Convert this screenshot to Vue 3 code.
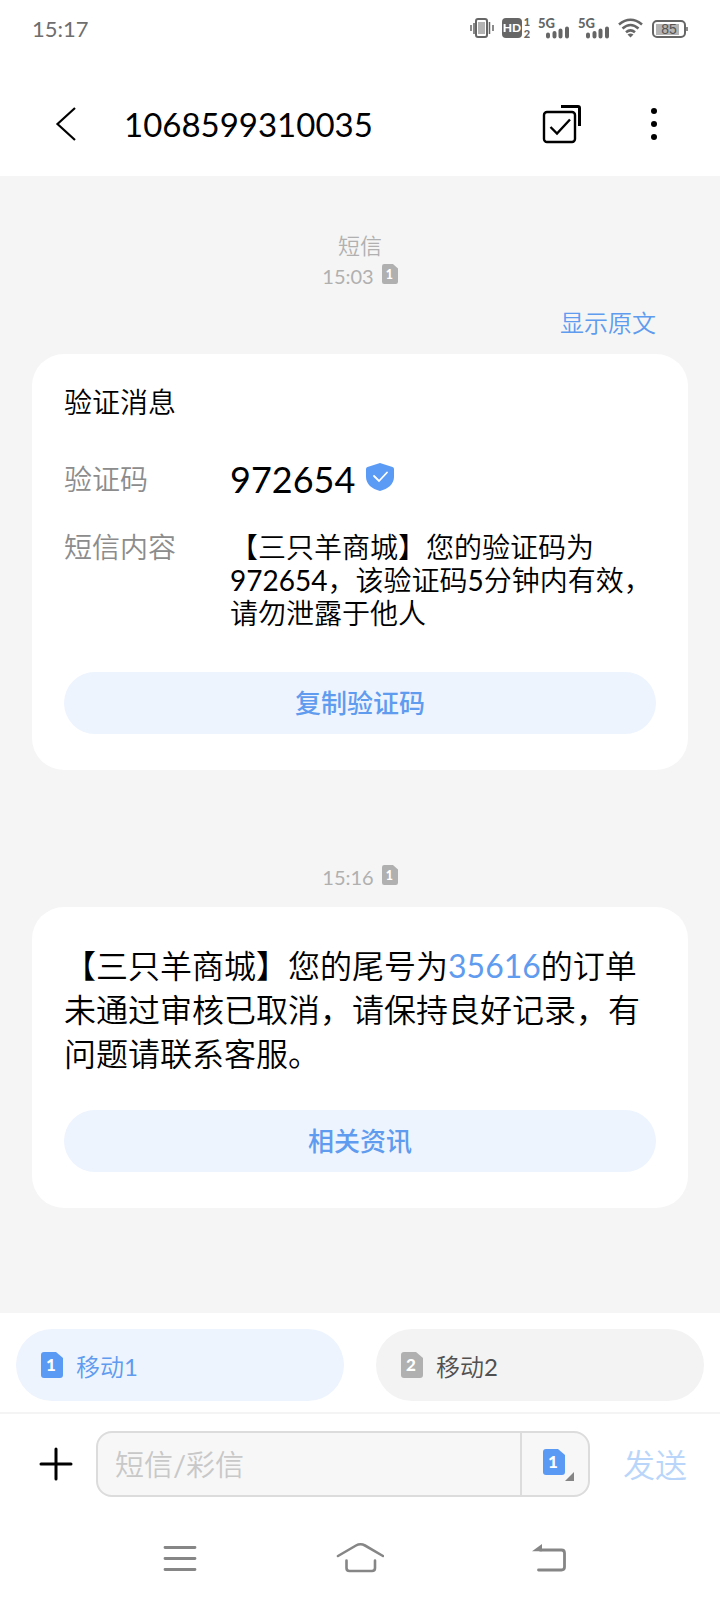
<script setup>
import { ref } from 'vue'

const draft = ref('')
const activeSim = ref(1)
const sims = [
  { id: 1, name: '移动1' },
  { id: 2, name: '移动2' }
]
const signals = [1, 2]
</script>

<template>
  <div class="phone">
    <div class="status">
      <time class="clock">15:17</time>
      <div class="indicators">
        <svg width="26" height="24" viewBox="0 0 26 24" aria-hidden="true">
          <rect x="8" y="3" width="11" height="18" rx="2" fill="#fff" stroke="#666" stroke-width="2" />
          <rect x="10" y="6" width="7" height="12" fill="#b4b4b4" />
          <path d="M3 9v6M6 7v11M21.500 6v12M25 9v6" stroke="#666" stroke-width="1.500" fill="none" />
        </svg>
        <svg width="28" height="24" viewBox="0 0 28 24" aria-hidden="true">
          <rect x="0" y="2" width="20" height="20" rx="4" fill="#666" />
          <text x="10" y="16" class="g-hd">HD</text>
          <text x="25" y="10" class="g-idx">1</text>
          <text x="25" y="22" class="g-idx">2</text>
        </svg>
        <svg v-for="s in signals" :key="s" width="32" height="24" viewBox="0 0 32 24" aria-hidden="true">
          <text x="0" y="12" class="g-net">5G</text>
          <path d="M10 18.500v2M16.500 17v3.500M22.500 14.500v6M29 12.500v8" stroke="#666" stroke-width="4" stroke-linecap="round" />
        </svg>
        <svg width="26" height="24" viewBox="0 0 26 24" aria-hidden="true">
          <g fill="none" stroke="#666" stroke-width="2.600">
            <path d="M1 8.500Q12.500-1 24 8.500" />
            <path d="M4.500 12.500Q12.500 5.500 20.500 12.500" />
            <path d="M8 16.300Q12.500 12.500 17 16.300" />
          </g>
          <path d="M9.500 18.500Q12.500 16.500 15.500 18.500L12.500 21.500Z" fill="#666" />
        </svg>
        <svg width="36" height="24" viewBox="0 0 36 24" aria-hidden="true">
          <rect x="1" y="5" width="32" height="16" rx="4" fill="#fff" stroke="#666" stroke-width="2" />
          <rect x="4" y="8" width="23" height="11" fill="#b4b4b4" />
          <path d="M35 11v4" stroke="#666" stroke-width="1.500" />
          <text x="17" y="18" class="g-bat">85</text>
        </svg>
      </div>
    </div>

    <header class="header">
      <button class="icon-btn back" type="button" aria-label="返回">
        <svg width="24" height="36" viewBox="0 0 24 36"><path d="M20 2 2.500 18 20 34" fill="none" stroke="#000" stroke-width="2.200" /></svg>
      </button>
      <h1 class="title">1068599310035</h1>
      <button class="icon-btn select-all" type="button" aria-label="选择">
        <svg width="40" height="40" viewBox="0 0 40 40" fill="none" stroke="#000">
          <rect x="2" y="8" width="31" height="30" rx="3" stroke-width="2.400" />
          <path d="M19 2.500H36Q37.500 2.500 37.500 4V22" stroke-width="3" />
          <path d="M8.500 23 15 29.500 28 15.500" stroke-width="2.400" />
        </svg>
      </button>
      <button class="icon-btn more" type="button" aria-label="更多">
        <svg width="8" height="36" viewBox="0 0 8 36"><circle cx="4" cy="5" r="3" /><circle cx="4" cy="18" r="3" /><circle cx="4" cy="31" r="3" /></svg>
      </button>
    </header>

    <main class="chat">
      <p class="stamp">短信</p>
      <p class="stamp">
        <time>15:03</time>
        <svg class="sim-sm" width="16" height="20" viewBox="0 0 22 26" preserveAspectRatio="none"><path d="M3 0h12l7 6v17a3 3 0 0 1-3 3H3a3 3 0 0 1-3-3V3a3 3 0 0 1 3-3z" /><text x="10" y="19">1</text></svg>
      </p>
      <a class="raw" href="#">显示原文</a>

      <section class="card verify">
        <h2 class="card-title">验证消息</h2>
        <dl class="fields">
          <dt>验证码</dt>
          <dd class="code">
            <span>972654</span>
            <svg width="28" height="28" viewBox="0 0 28 28" aria-hidden="true">
              <path d="M12.500 .5Q14-.3 15.500 .5L26.500 4Q28 4.600 28 6V14C28 21 22 26 14 28C6 26 0 21 0 14V6Q0 4.600 1.500 4Z" fill="#5c9bf5" />
              <path d="M8 13 13 18 21 9.500" fill="none" stroke="#fff" stroke-width="1.800" stroke-linecap="round" />
            </svg>
          </dd>
          <dt>短信内容</dt>
          <dd>【三只羊商城】您的验证码为972654，该验证码5分钟内有效，请勿泄露于他人</dd>
        </dl>
        <button class="action" type="button">复制验证码</button>
      </section>

      <p class="stamp later">
        <time>15:16</time>
        <svg class="sim-sm" width="16" height="20" viewBox="0 0 22 26" preserveAspectRatio="none"><path d="M3 0h12l7 6v17a3 3 0 0 1-3 3H3a3 3 0 0 1-3-3V3a3 3 0 0 1 3-3z" /><text x="10" y="19">1</text></svg>
      </p>
      <section class="card notice">
        <p class="message">【三只羊商城】您的尾号为<a href="#">35616</a>的订单未通过审核已取消，请保持良好记录，有问题请联系客服。</p>
        <button class="action" type="button">相关资讯</button>
      </section>
    </main>

    <footer class="footer">
      <div class="sims">
        <button
          v-for="sim in sims"
          :key="sim.id"
          type="button"
          class="sim"
          :class="{ active: sim.id === activeSim }"
          :aria-pressed="sim.id === activeSim"
          @click="activeSim = sim.id"
        >
          <svg width="22" height="26" viewBox="0 0 22 26" aria-hidden="true"><path d="M3 0h12l7 6v17a3 3 0 0 1-3 3H3a3 3 0 0 1-3-3V3a3 3 0 0 1 3-3z" /><text x="10" y="19">{{ sim.id }}</text></svg>
          <span>{{ sim.name }}</span>
        </button>
      </div>

      <form class="compose" @submit.prevent>
        <button class="icon-btn plus" type="button" aria-label="添加">
          <svg width="34" height="34" viewBox="0 0 34 34"><path d="M17 2v30M2 17h30" stroke="#000" stroke-width="3" stroke-linecap="round" /></svg>
        </button>
        <div class="box">
          <input v-model="draft" type="text" placeholder="短信/彩信" aria-label="短信/彩信" />
          <button class="icon-btn sim-pick" type="button" aria-label="选择 SIM 卡">
            <svg width="32" height="34" viewBox="0 0 32 34">
              <path d="M3 2h12l7 6v17a3 3 0 0 1-3 3H3a3 3 0 0 1-3-3V5a3 3 0 0 1 3-3z" fill="#5a9af5" />
              <text x="10" y="21">{{ activeSim }}</text>
              <path d="M31 25v9h-9z" fill="#858585" />
            </svg>
          </button>
        </div>
        <button class="send" type="submit">发送</button>
      </form>

      <nav class="nav">
        <button class="icon-btn" type="button" aria-label="菜单">
          <svg width="48" height="32" viewBox="0 0 48 32"><path d="M9 5.500h30M9 16.500h30M9 27.500h30" stroke="#868686" stroke-width="2.800" stroke-linecap="round" /></svg>
        </button>
        <button class="icon-btn" type="button" aria-label="主页">
          <svg width="48" height="32" viewBox="0 0 48 32" fill="none" stroke="#868686" stroke-width="2.600" stroke-linecap="round">
            <path d="M2 14 20 3.500Q24.500 1 29 3.500L47 14" />
            <path d="M10.500 18.500V26Q10.500 29 13.500 29H36Q39 29 39 26V18.500" />
          </svg>
        </button>
        <button class="icon-btn" type="button" aria-label="返回上一级">
          <svg width="52" height="32" viewBox="0 0 52 32">
            <path d="M26 8H47.500Q50.500 8 50.500 11V25Q50.500 28 47.500 28H24.500" fill="none" stroke="#868686" stroke-width="2.800" stroke-linecap="round" />
            <path d="M18 9.300 28 2V9.300z" fill="#868686" />
          </svg>
        </button>
      </nav>
    </footer>
  </div>
</template>

<style>
body {
  margin: 0;
  background: #fff;
}
</style>

<style scoped>
.phone {
  display: flex;
  flex-direction: column;
  min-height: 100vh;
  background: #fff;
  color: #000;
  font-family: Lato, "Noto Sans CJK SC DemiLight", "Noto Sans CJK SC", sans-serif;
  font-weight: 400;
  font-size: 28px;
}
.phone * {
  box-sizing: border-box;
}
h1, h2, p, dl, dd {
  margin: 0;
  font-weight: inherit;
}
button, input {
  border: 0;
  padding: 0;
  background: none;
  font: inherit;
  color: inherit;
}
a {
  color: #5f9bee;
  text-decoration: none;
}
svg {
  display: block;
  flex: none;
}
svg text {
  font-family: Lato, sans-serif;
  font-weight: 900;
  font-size: 17px;
  fill: #fff;
  text-anchor: middle;
}
.icon-btn {
  display: flex;
  align-items: center;
  justify-content: center;
}

.status {
  display: flex;
  align-items: center;
  justify-content: space-between;
  height: 56px;
  padding: 0 32px;
}
.clock {
  font-size: 22px;
  color: #6e6e6e;
}
.indicators {
  display: flex;
  gap: 8px;
}
svg .g-hd {
  font-size: 12px;
}
svg .g-idx {
  font-size: 11px;
  fill: #666;
}
svg .g-net {
  font-size: 13px;
  fill: #666;
  text-anchor: start;
}
svg .g-bat {
  font-family: "Liberation Sans", sans-serif;
  font-size: 14px;
  font-weight: 400;
  fill: #555;
}

.header {
  display: flex;
  align-items: center;
  height: 120px;
  padding: 16px 62px 0 55px;
}
.title {
  flex: 1;
  margin-left: 45px;
  font-size: 33px;
}
.more {
  margin-left: 68px;
}

.chat {
  flex: 1;
  display: flex;
  flex-direction: column;
  padding: 55px 32px 32px;
  background: #f5f5f5;
}
.stamp {
  display: flex;
  align-items: center;
  justify-content: center;
  gap: 8px;
  font-size: 22px;
  line-height: 30px;
  color: #b0b0b0;
}
.stamp time {
  font-size: 20px;
}
.stamp.later {
  margin-top: 92px;
}
.sim-sm {
  margin-bottom: 4px;
  fill: #b0b0b0;
}
.raw {
  align-self: flex-end;
  margin: 14px 32px 13px 0;
  font-size: 24px;
  line-height: 36px;
}
.card {
  display: flex;
  flex-direction: column;
  padding: 30px 32px 36px;
  border-radius: 32px;
  background: #fff;
}
.card-title {
  font-size: 28px;
  line-height: 36px;
}
.fields {
  display: grid;
  grid-template-columns: 166px 1fr;
  row-gap: 30px;
  margin: 37px 0 42px;
  line-height: 33px;
}
.fields dt {
  color: #8c8c8c;
}
.fields dt:first-child {
  line-height: 44px;
}
.code {
  display: flex;
  align-items: center;
  gap: 11px;
  font-size: 36px;
  line-height: 42px;
}
.code svg {
  margin-bottom: 4px;
}
.action {
  height: 62px;
  padding-bottom: 3px;
  border-radius: 32px;
  background: #edf4fe;
  color: #5f9bee;
  font-family: Lato, "Noto Sans CJK SC", sans-serif;
  font-size: 26px;
  font-weight: 500;
}
.notice {
  margin-top: 15px;
  padding-top: 37px;
}
.message {
  margin-bottom: 34px;
  font-size: 32px;
  line-height: 44px;
}

.sims {
  display: grid;
  grid-template-columns: 1fr 1fr;
  gap: 32px;
  padding: 16px 16px 11px;
  border-bottom: 2px solid #f4f4f4;
}
.sim {
  display: flex;
  align-items: center;
  gap: 13px;
  height: 72px;
  padding-left: 25px;
  border-radius: 36px;
  background: #f3f3f3;
  color: #505050;
  font-size: 24px;
}
.sim svg {
  fill: #b0b0b0;
}
.sim.active {
  background: #edf4fe;
  color: #5f9bee;
}
.sim.active svg {
  fill: #5a9af5;
}
.compose {
  display: flex;
  align-items: center;
  padding: 17px 0 19px;
}
.plus {
  width: 34px;
  margin: 0 23px 0 39px;
}
.box {
  display: flex;
  flex: 1;
  min-width: 0;
  height: 66px;
  border: 2px solid #dcdcdc;
  border-radius: 16px;
  background: #f7f7f7;
}
.box input {
  flex: 1;
  min-width: 0;
  padding-left: 17px;
  font-size: 29px;
  outline: none;
}
.box input::placeholder {
  color: #c8c8c8;
  opacity: 1;
}
.sim-pick {
  width: 68px;
  padding-left: 8px;
  border-left: 2px solid #dcdcdc;
}
.send {
  width: 130px;
  padding-bottom: 2px;
  color: #b9d6fa;
  font-size: 32px;
}
.nav {
  display: grid;
  grid-template-columns: repeat(3, 1fr);
  height: 84px;
  padding: 0 12.5%;
}
</style>
